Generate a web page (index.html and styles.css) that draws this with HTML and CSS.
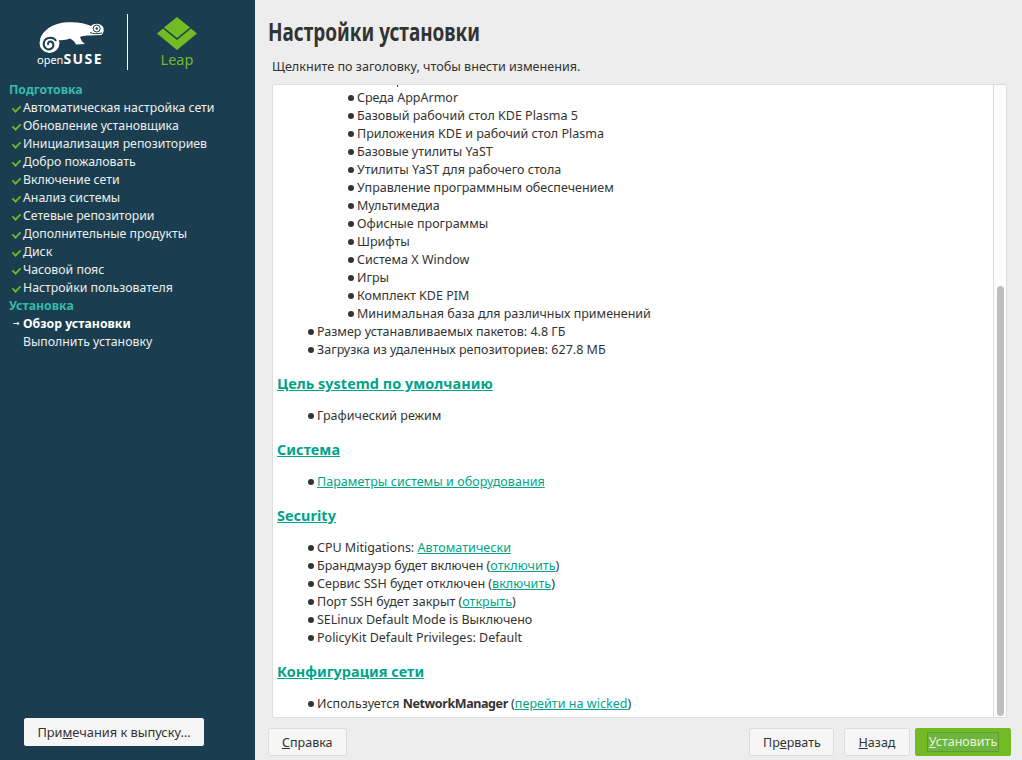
FILE: index.html
```html
<!DOCTYPE html>
<html lang="ru">
<head>
  <meta charset="UTF-8" />
  <title>Настройки установки</title>
  <link rel="stylesheet" href="styles.css">
</head>
<body>

  <!-- sidebar: logos + steps -->
  <aside class="sidebar">
    <div class="logos">
      <div class="suse-logo">
        <svg class="chameleon" width="66" height="32" viewBox="0 0 66 32">
          <path fill="#fff" d="M1 17C4 8 14 1 28 0.300C38 -0.300 46 1 52 4C55 1 61 0.500 64 5C65.500 8 64.500 11 62.500 13L50 13.500C47 13.500 43 14 41 15C42 18 43 20 46 22L37 22.500C36 20 34 18 31 16.500C27 18 23 18.500 20 18L8 16Z"/>
          <circle fill="#fff" cx="10.500" cy="21" r="10"/>
          <path fill="none" stroke="#1a3e50" stroke-width="2" d="M17 19C15 14.500 7 14.500 5 20C3.500 25 8 28.500 11.500 27C15 26 15.500 21 12 19.500C10 19 8 21 9.500 23"/>
          <path fill="none" stroke="#1a3e50" stroke-width="1" d="M51 10.500C54 12 59 12 63 11"/>
          <circle fill="none" stroke="#1a3e50" stroke-width="1" cx="57.700" cy="6.500" r="3.500"/>
          <circle fill="#1a3e50" cx="57.700" cy="6.500" r="1.200"/>
        </svg>
        <div class="wordmark"><span class="open">open</span><span class="suse">SUSE</span></div>
      </div>
      <div class="logo-divider"></div>
      <div class="leap-logo">
        <svg width="40" height="33" viewBox="0 0 40 33">
          <path fill="#73ba25" d="M20 0L33 10.500L20 21L7 10.500Z"/>
          <path fill="#73ba25" d="M6 11.500L20 23L34 11.500L40 16.500L20 33L0 16.500Z"/>
        </svg>
        <div class="leap-text">Leap</div>
      </div>
    </div>

    <div class="steps">
      <div class="step-title">Подготовка</div>
      <div class="step done">Автоматическая настройка сети</div>
      <div class="step done">Обновление установщика</div>
      <div class="step done">Инициализация репозиториев</div>
      <div class="step done">Добро пожаловать</div>
      <div class="step done">Включение сети</div>
      <div class="step done">Анализ системы</div>
      <div class="step done">Сетевые репозитории</div>
      <div class="step done">Дополнительные продукты</div>
      <div class="step done">Диск</div>
      <div class="step done">Часовой пояс</div>
      <div class="step done">Настройки пользователя</div>
      <div class="step-title">Установка</div>
      <div class="step current">Обзор установки</div>
      <div class="step">Выполнить установку</div>
    </div>

    <button class="btn release-btn">При<u>м</u>ечания к выпуску…</button>
  </aside>

  <main class="main">
    <h1>Настройки установки</h1>
    <p class="hint">Щелкните по заголовку, чтобы внести изменения.</p>

    <div class="summary">
      <div class="summary-clip">
        <div class="summary-inner">
          <div class="cut-line"></div>
          <ul class="sub-list">
            <li>Среда AppArmor</li>
            <li>Базовый рабочий стол KDE Plasma 5</li>
            <li>Приложения KDE и рабочий стол Plasma</li>
            <li>Базовые утилиты YaST</li>
            <li>Утилиты YaST для рабочего стола</li>
            <li>Управление программным обеспечением</li>
            <li>Мультимедиа</li>
            <li>Офисные программы</li>
            <li>Шрифты</li>
            <li>Система X Window</li>
            <li>Игры</li>
            <li>Комплект KDE PIM</li>
            <li>Минимальная база для различных применений</li>
          </ul>
          <ul>
            <li>Размер устанавливаемых пакетов: 4.8 ГБ</li>
            <li>Загрузка из удаленных репозиториев: 627.8 МБ</li>
          </ul>

          <h2><a href="#">Цель systemd по умолчанию</a></h2>
          <ul>
            <li>Графический режим</li>
          </ul>

          <h2><a href="#">Система</a></h2>
          <ul>
            <li><a href="#">Параметры системы и оборудования</a></li>
          </ul>

          <h2><a href="#">Security</a></h2>
          <ul>
            <li>CPU Mitigations: <a href="#">Автоматически</a></li>
            <li>Брандмауэр будет включен (<a href="#">отключить</a>)</li>
            <li>Сервис SSH будет отключен (<a href="#">включить</a>)</li>
            <li>Порт SSH будет закрыт (<a href="#">открыть</a>)</li>
            <li>SELinux Default Mode is Выключено</li>
            <li>PolicyKit Default Privileges: Default</li>
          </ul>

          <h2><a href="#">Конфигурация сети</a></h2>
          <ul>
            <li>Используется <b>NetworkManager</b> (<a href="#">перейти на wicked</a>)</li>
          </ul>
        </div>
      </div>
      <div class="scrollbar"><div class="thumb"></div></div>
    </div>

    <div class="actions">
      <button class="btn"><u>С</u>правка</button>
      <div class="actions-right">
        <button class="btn abort-btn">Пр<u>е</u>рвать</button>
        <button class="btn back-btn"><u>Н</u>азад</button>
        <button class="btn install-btn"><span class="focus"><u>У</u>становить</span></button>
      </div>
    </div>
  </main>

</body>
</html>
```

FILE: styles.css
```css
* {
  box-sizing: border-box;
  margin: 0;
  padding: 0;
}

body {
  width: 1022px;
  height: 760px;
  overflow: hidden;
  display: flex;
  font-family: "Noto Sans", sans-serif;
  font-size: 12.5px;
  color: #333;
  background: #ededed;
}

/* ===== SIDEBAR ===== */
.sidebar {
  width: 255px;
  height: 760px;
  background: #1a3e50;
  color: #eee;
  display: flex;
  flex-direction: column;
  flex-shrink: 0;
}

.logos {
  height: 81px;
  padding: 14px 0 0 39px;
  display: flex;
  align-items: flex-start;
}

.suse-logo {
  width: 66px;
}

.chameleon {
  display: block;
  margin-top: 8px;
}

.wordmark {
  margin-top: -3px;
  margin-left: -2px;
  line-height: 15px;
  color: #fff;
  white-space: nowrap;
}

.wordmark .open {
  font-size: 11px;
}

.wordmark .suse {
  font-size: 14px;
  font-weight: 700;
  letter-spacing: 1.4px;
}

.logo-divider {
  width: 1px;
  height: 56px;
  margin-left: 22px;
  background: #fff;
}

.leap-logo {
  margin: 3px 0 0 29px;
  width: 40px;
  text-align: center;
}

.leap-logo svg {
  display: block;
}

.leap-text {
  font-size: 14.5px;
  line-height: 20px;
  margin-top: -1px;
  color: #73ba25;
}

.steps {
  flex: 1;
  font-size: 12.3px;
}

.step-title {
  height: 18px;
  line-height: 18px;
  padding-left: 9px;
  font-weight: 700;
  color: #35b9ab;
}

.step {
  position: relative;
  height: 18px;
  line-height: 18px;
  padding-left: 23px;
}

.step.done::before {
  content: "";
  position: absolute;
  left: 12px;
  top: 6px;
  width: 7px;
  height: 4px;
  border-left: 2px solid #73ba25;
  border-bottom: 2px solid #73ba25;
  transform: rotate(-45deg) scale(0.9);
}

.step.current {
  font-weight: 700;
  color: #fff;
}

.step.current::before {
  content: "→";
  position: absolute;
  left: 13px;
  font-family: "DejaVu Sans", sans-serif;
  font-size: 8px;
}

.btn {
  height: 28px;
  padding: 0 13px;
  font-family: inherit;
  font-size: 12.5px;
  color: #333;
  background: #f6f6f6;
  border: 1px solid #ddd;
  border-radius: 2px;
  white-space: nowrap;
}

.release-btn {
  width: 180px;
  margin: 0 0 14px 24px;
  padding: 0;
  font-size: 12.8px;
  border-color: #f6f6f6;
}

/* ===== MAIN ===== */
.main {
  flex: 1;
  padding: 0 11px 5px 13px;
  display: flex;
  flex-direction: column;
}

/* title font in the shot is condensed, no such family installed */
h1 {
  margin-top: 15px;
  height: 32px;
  line-height: 32px;
  font-size: 25px;
  font-weight: 700;
  color: #333;
  white-space: nowrap;
  transform: scaleX(0.757);
  transform-origin: left center;
}

.hint {
  margin: 11px 0 0 4px;
  line-height: 18px;
  font-size: 12.6px;
}

.summary {
  margin: 8px -1px 0 4px;
  height: 634px;
  width: 735px;
  display: flex;
  background: #fff;
  border: 1px solid #ddd;
  border-radius: 2px;
}

.summary-clip {
  flex: 1;
  overflow: hidden;
}

.summary-inner {
  padding-left: 4px;
}

/* descender of the line scrolled off above */
.cut-line {
  width: 1px;
  height: 2px;
  margin: 0 0 2px 120px;
  background: #333;
}

.summary ul {
  list-style: none;
  padding-left: 40px;
}

.summary ul.sub-list {
  padding-left: 80px;
}

.summary li {
  position: relative;
  height: 18px;
  line-height: 18px;
  white-space: nowrap;
}

.summary li::before {
  content: "";
  position: absolute;
  left: -9px;
  top: 6px;
  width: 6px;
  height: 6px;
  border-radius: 50%;
  background: #333;
}

.summary a {
  color: #00a489;
  letter-spacing: 0.05px;
}

.summary li b {
  letter-spacing: -0.4px;
}

h2 {
  margin: 16px 0 14px;
  height: 18px;
  line-height: 17px;
  font-size: 14.4px;
  font-weight: 700;
}

h2 a {
  letter-spacing: 0;
}

.scrollbar {
  width: 13px;
  padding: 201px 2px 1px 3px;
  background: #fcfcfc;
  border-left: 1px solid #ddd;
}

.thumb {
  height: 430px;
  background: #bebebe;
  border-radius: 4px;
}

.actions {
  margin-top: 10px;
  display: flex;
  justify-content: space-between;
}

.actions-right {
  display: flex;
}

.abort-btn {
  width: 85px;
  margin-right: 10px;
}

.back-btn {
  width: 66px;
  margin-right: 5px;
}

.install-btn {
  width: 96px;
  padding: 0;
  color: #e8f3dc;
  background: #73ba25;
  border-color: #73ba25;
}

.focus {
  display: inline-block;
  width: 70px;
  line-height: 18px;
  background: #6eb53c;
  outline: 1px solid #5c9c3a;
}
```
